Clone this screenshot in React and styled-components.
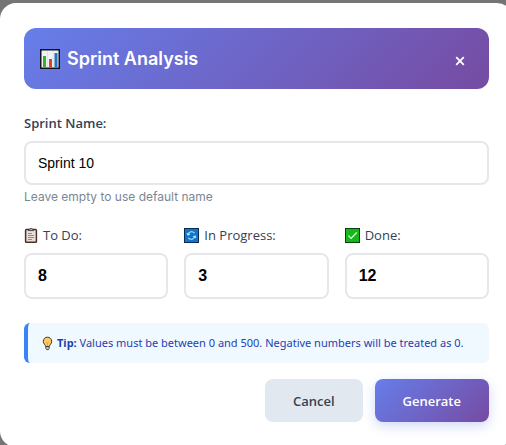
import React, { useState } from 'react';
import styled, { createGlobalStyle } from 'styled-components';

const ChartIcon = () => (
  <svg width="20" height="20" viewBox="0 0 20 20" aria-hidden="true">
    <rect x="0.75" y="0.75" width="18.5" height="18.5" fill="#f1f2f6" stroke="#12131f" strokeWidth="1.5" />
    <path d="M7.5 2v16M13 2v16" stroke="#d5d7e0" strokeWidth="0.6" />
    <rect x="3" y="7" width="3" height="11.5" fill="#35b02c" />
    <rect x="9" y="10" width="3" height="8.5" fill="#e0412c" />
    <rect x="14.5" y="4" width="3" height="14.5" fill="#1b77bf" />
  </svg>
)

const ClipboardIcon = () => (
  <svg width="14" height="15" viewBox="0 0 14 15" aria-hidden="true">
    <rect x="1.6" y="1.6" width="10.8" height="12.6" rx="0.8" fill="#e8dfdb" stroke="#4b3029" strokeWidth="1.5" />
    <path d="M4.5 2.6V1.2h1.3a1.3 1.3 0 0 1 2.4 0h1.3v1.4z" fill="#b9b4b2" stroke="#3a2a26" strokeWidth="0.8" />
    <path d="M4 5.5h4M4 7.5h6M4 9.5h6M4 11.5h4" stroke="#81736e" strokeWidth="0.8" />
  </svg>
)

const RefreshIcon = () => (
  <svg width="15" height="15" viewBox="0 0 15 15" aria-hidden="true">
    <rect x="0.5" y="0.5" width="14" height="14" fill="#0f76c9" stroke="#0b2b4d" />
    <g fill="none" stroke="#b8e2fb" strokeWidth="1.1">
      <path d="M4 6.8a3.7 3.7 0 0 1 6.6-1.6M11 8.2a3.7 3.7 0 0 1-6.6 1.6" />
      <path d="M3 5l1 2 2-1M12 10l-1-2-2 1" />
    </g>
  </svg>
)

const CheckIcon = () => (
  <svg width="15" height="15" viewBox="0 0 15 15" aria-hidden="true">
    <rect x="0.5" y="0.5" width="14" height="14" fill="#14b81a" stroke="#0c3d12" />
    <path d="M3.4 7.6l2.7 2.7 5.6-5.8" fill="none" stroke="#e4fbe2" strokeWidth="1.2" />
  </svg>
)

const BulbIcon = () => (
  <svg width="11" height="15" viewBox="0 0 12 15" aria-hidden="true">
    <path d="M4 10.8C3.8 8.8 1.4 7.9 1.4 5.1a4.6 4.5 0 0 1 9.2 0c0 2.8-2.4 3.7-2.6 5.7z" fill="#fbcb62" stroke="#302a20" strokeWidth="1" />
    <path d="M4.7 6.2l1.3 1 1.3-1M6 7.2v3.4" fill="none" stroke="#d98f2b" strokeWidth="0.7" />
    <path d="M4.2 10.8h3.6v2.4L6.9 14.2H5.1l-.9-1z" fill="#c9cbd0" stroke="#302a20" strokeWidth="0.9" />
  </svg>
)

const CloseIcon = () => (
  <svg width="10" height="10" viewBox="0 0 10 10" aria-hidden="true">
    <path d="M1.2 1.2l7.6 7.6M8.8 1.2L1.2 8.8" stroke="#fff" strokeWidth="1.8" />
  </svg>
)

const counters = [
  { id: 'todo', label: 'To Do:', Icon: ClipboardIcon },
  { id: 'progress', label: 'In Progress:', Icon: RefreshIcon },
  { id: 'done', label: 'Done:', Icon: CheckIcon },
]

const App = () => {
  const [name, setName] = useState('Sprint 10')
  const [values, setValues] = useState({ todo: '8', progress: '3', done: '12' })

  return (
    <>
      <GlobalStyle />
      <Overlay>
        <Modal role="dialog" aria-labelledby="title">
          <Header>
            <Title id="title"><ChartIcon />Sprint Analysis</Title>
            <CloseButton type="button" aria-label="Close"><CloseIcon /></CloseButton>
          </Header>
          <Field>
            <Label htmlFor="name" $strong>Sprint Name:</Label>
            <Input id="name" type="text" value={name} onChange={(e) => setName(e.target.value)} />
            <Hint>Leave empty to use default name</Hint>
          </Field>
          <Counters>
            {counters.map(({ id, label, Icon }) => (
              <Field key={id}>
                <Label htmlFor={id}><Icon />{label}</Label>
                <Input
                  $bold
                  id={id}
                  type="text"
                  inputMode="numeric"
                  value={values[id]}
                  onChange={(e) => setValues({ ...values, [id]: e.target.value })}
                />
              </Field>
            ))}
          </Counters>
          <Tip>
            <BulbIcon />
            <span><strong>Tip:</strong> Values must be between 0 and 500. Negative numbers will be treated as 0.</span>
          </Tip>
          <Actions>
            <Button type="button">Cancel</Button>
            <Button type="button" $primary>Generate</Button>
          </Actions>
        </Modal>
      </Overlay>
    </>
  );
};

export default App

const GlobalStyle = createGlobalStyle`
  * {
    box-sizing: border-box;
  }
  body {
    margin: 0;
    background: #757575;
    font-family: 'Open Sans', 'Noto Sans', sans-serif;
  }
  svg {
    flex: none;
  }
`

const Overlay = styled.div`
  height: 100vh;
  padding-top: 3px;
  overflow: hidden;
`

const Modal = styled.div`
  width: calc(100% + 7px);
  padding: 25px 24px;
  background: #fff;
  border-radius: 16px;
`

const Header = styled.div`
  display: flex;
  align-items: center;
  justify-content: space-between;
  padding: 14px 16px;
  margin-bottom: 24px;
  border-radius: 12px;
  background: linear-gradient(135deg, #667eea 0%, #764ba2 100%);
`

const Title = styled.h2`
  display: flex;
  align-items: center;
  gap: 7px;
  margin: 0;
  font: 600 18px/24px Inter, sans-serif;
  color: #fff;
`

const CloseButton = styled.button`
  display: flex;
  align-items: flex-end;
  justify-content: center;
  width: 26px;
  height: 33px;
  padding: 0 0 9px;
  border: none;
  background: none;
  cursor: pointer;
`

const Field = styled.div`
  display: flex;
  flex-direction: column;
  min-width: 0;
`

const Label = styled.label`
  display: flex;
  align-items: center;
  gap: 5px;
  margin-bottom: 8px;
  font-size: 13px;
  font-weight: ${props => props.$strong ? 600 : 500};
  line-height: 20px;
  color: #374151;
`

const Input = styled.input`
  width: 100%;
  height: ${props => props.$bold ? 46 : 44}px;
  padding: 0 12px;
  border: 2px solid #e5e7eb;
  border-radius: 8px;
  background: #fff;
  color: #000;
  font-family: 'Liberation Sans', Arial, sans-serif;
  font-size: ${props => props.$bold ? 16 : 14}px;
  font-weight: ${props => props.$bold ? 700 : 400};
`

const Hint = styled.small`
  margin-top: 4px;
  font: 400 12px/16px Inter, sans-serif;
  color: #7b8794;
`

const Counters = styled.div`
  display: grid;
  grid-template-columns: repeat(3, 1fr);
  gap: 16px;
  margin: 20px 0 24px;
`

const Tip = styled.div`
  display: flex;
  align-items: center;
  gap: 4px;
  padding: 12px 14px;
  border-left: 4px solid #3b82f6;
  border-radius: 6px;
  background: #f0f9ff;
  color: #1e40af;
  font-family: 'Noto Sans', sans-serif;
  font-size: 11px;
  line-height: 16px;
`

const Actions = styled.div`
  display: flex;
  justify-content: flex-end;
  gap: 12px;
  margin-top: 16px;
`

const Button = styled.button`
  height: 43px;
  padding: 0 28px;
  border: none;
  border-radius: 8px;
  background: ${props => props.$primary ? 'linear-gradient(135deg, #667eea 0%, #764ba2 100%)' : '#e2e8f0'};
  box-shadow: ${props => props.$primary ? '0 4px 12px rgba(102, 126, 234, 0.3)' : 'none'};
  color: ${props => props.$primary ? '#fff' : '#374151'};
  font-family: inherit;
  font-size: 13px;
  font-weight: 600;
  cursor: pointer;
`
